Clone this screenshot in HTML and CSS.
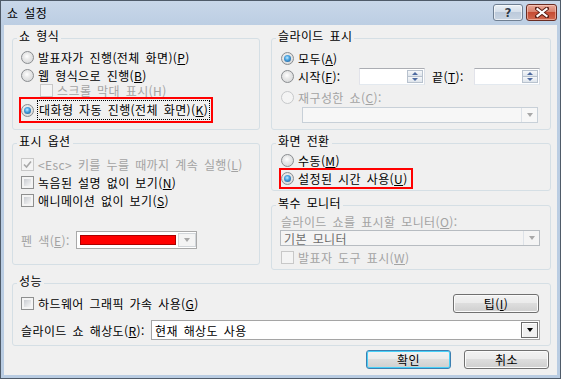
FILE: index.html
```html
<!DOCTYPE html>
<html lang="ko">
<head>
<meta charset="utf-8">
<title>쇼 설정</title>
<link rel="stylesheet" href="styles.css">
</head>
<body>
<div class="window">
  <div class="titlebar">
    <span class="title">쇼 설정</span>
    <span class="tbtn help"><span class="qmark">?</span></span>
    <span class="tbtn close">
      <svg width="14" height="11" viewBox="0 0 14 11">
        <path d="M2 1.5 L12 9.5 M12 1.5 L2 9.5" stroke="#5a1e14" stroke-width="4" stroke-linecap="square"/>
        <path d="M2.5 2 L11.5 9 M11.5 2 L2.5 9" stroke="#ffffff" stroke-width="2.2" stroke-linecap="square"/>
      </svg>
    </span>
  </div>
  <div class="client">
    <div class="grid top">
      <fieldset class="grp">
        <legend>쇼 형식</legend>
        <div class="gin g1">
          <div class="row"><i class="radio"></i>발표자가 진행(전체 화면)(<u>P</u>)</div>
          <div class="row"><i class="radio"></i>웹 형식으로 진행(<u>B</u>)</div>
          <div class="row sub dis"><i class="check dis"></i>스크롤 막대 표시(<u>H</u>)</div>
          <div class="row hl1"><i class="radio on"></i><span class="focus">대화형 자동 진행(전체 화면)(<u>K</u>)</span></div>
        </div>
      </fieldset>
      <fieldset class="grp">
        <legend>슬라이드 표시</legend>
        <div class="gin g2">
          <div class="row"><i class="radio on"></i>모두(<u>A</u>)</div>
          <div class="row r19"><i class="radio"></i><span class="lbl-start">시작(<u>F</u>):</span><span class="spin"><span class="sb"><span><i class="up"></i></span><span><i class="down"></i></span></span></span><span class="lbl-end">끝(<u>T</u>):</span><span class="spin"><span class="sb"><span><i class="up"></i></span><span><i class="down"></i></span></span></span></div>
          <div class="row dis r3"><i class="radio dis"></i>재구성한 쇼(<u>C</u>):</div>
          <div class="combo dis custom"><span class="ctext"></span><span class="cbtn"><i class="arrow"></i></span></div>
        </div>
      </fieldset>
    </div>
    <div class="grid mid">
      <fieldset class="grp opts">
        <legend>표시 옵션</legend>
        <div class="gin g3">
          <div class="row dis"><i class="check dis on"><svg width="9" height="9" viewBox="0 0 9 9"><path d="M1 4.5 L3.5 7 L8 1.5" fill="none" stroke="#a8a8a8" stroke-width="1.6"/></svg></i><span class="esc">&lt;Esc&gt; 키를 누를 때까지 계속 실행(<u>L</u>)</span></div>
          <div class="row"><i class="check"></i>녹음된 설명 없이 보기(<u>N</u>)</div>
          <div class="row"><i class="check"></i>애니메이션 없이 보기(<u>S</u>)</div>
          <div class="row pen dis"><span class="pen-lbl">펜 색(<u>E</u>):</span><span class="ccombo"><span class="swatch"></span><span class="cbtn dis"><i class="arrow"></i></span></span></div>
        </div>
      </fieldset>
      <div class="rcol">
        <fieldset class="grp">
          <legend>화면 전환</legend>
          <div class="gin g4">
            <div class="row r16"><i class="radio"></i>수동(<u>M</u>)</div>
            <div class="row hl2"><i class="radio on"></i>설정된 시간 사용(<u>U</u>)</div>
          </div>
        </fieldset>
        <fieldset class="grp">
          <legend>복수 모니터</legend>
          <div class="gin g5">
            <div class="row dis r14">슬라이드 쇼를 표시할 모니터(<u>O</u>):</div>
            <div class="combo dis mon"><span class="ctext">기본 모니터</span><span class="cbtn"><i class="arrow"></i></span></div>
            <div class="row dis r15"><i class="check dis"></i>발표자 도구 표시(<u>W</u>)</div>
          </div>
        </fieldset>
      </div>
    </div>
    <fieldset class="grp perf">
      <legend>성능</legend>
      <div class="gin g6">
        <div class="row p1"><i class="check"></i>하드웨어 그래픽 가속 사용(<u>G</u>)<span class="btn tip">팁(<u>I</u>)</span></div>
        <div class="row p2"><span class="res-lbl">슬라이드 쇼 해상도(<u>R</u>):</span><span class="combo res"><span class="ctext">현재 해상도 사용</span><span class="cbtn classic"><i class="arrow blk"></i></span></span></div>
      </div>
    </fieldset>
    <div class="btnrow">
      <span class="btn dflt">확인</span>
      <span class="btn">취소</span>
    </div>
  </div>
</div>
</body>
</html>
```
FILE: styles.css
```css
* { box-sizing: border-box; }
html, body { margin: 0; padding: 0; }
body {
  width: 561px; height: 379px; overflow: hidden; background: #ffffff;
  font-family: "Noto Sans CJK KR", "Noto Sans", sans-serif;
  font-size: 12px; letter-spacing: 0.4px; word-spacing: 2px; color: #000;
}
u { text-decoration: underline; text-underline-offset: 1px; }
.window {
  width: 561px; height: 379px;
  border: 1px solid #4f5b69;
  background: linear-gradient(#c8d7e9, #bccee3 24px, #b9cce2);
  display: flex; flex-direction: column;
}
.titlebar { height: 24px; flex: none; display: flex; align-items: flex-start; padding: 3px 3px 0 6px; }
.title { flex: 1; line-height: 18px; }
.tbtn { height: 17px; border-radius: 3px; margin-left: 3px; display: flex; align-items: center; justify-content: center; }
.help {
  width: 30px; border: 1px solid #6f7f92;
  background: linear-gradient(#eaf0f6, #d6dfea 45%, #bccadb 50%, #c8d4e2);
  box-shadow: inset 0 0 0 1px rgba(255,255,255,0.6);
}
.qmark { font-family: "DejaVu Sans", sans-serif; font-weight: bold; font-size: 12px; line-height: 14px; color: #2f3b4a; text-shadow: 0 0 1px #fff; letter-spacing: 0; }
.close {
  width: 31px; border: 1px solid #6a2c22;
  background: linear-gradient(#eaa999, #d8826e 45%, #c54b33 50%, #d1694f);
  box-shadow: inset 0 0 0 1px rgba(255,220,210,0.5);
}
.client {
  flex: 1; margin: 0 3px 3px 3px; background: #f0f0f0;
  padding: 4px 6px 0 8px; display: flex; flex-direction: column; gap: 4px;
}
.grid { display: grid; grid-template-columns: 248px 280px; column-gap: 11px; }
.mid { align-items: start; }
fieldset.grp { margin: 0; padding: 0; min-width: 0; border: 1px solid #d5dfe5; border-radius: 3px; }
legend { margin-left: 4px; padding: 0 2px 4px 2px; line-height: 14px; }
.row { display: flex; align-items: center; height: 18px; white-space: nowrap; }
.dis { color: #a3a3a3; }
.radio {
  width: 13px; height: 13px; flex: none; border-radius: 50%; margin-right: 4px; position: relative;
  border: 1px solid #8a8d90;
  background: radial-gradient(circle at 45% 40%, #ffffff 0, #eaeaea 35%, #cfd1d3 100%);
}
.radio.on::after {
  content: ""; position: absolute; left: 2px; top: 2px; width: 7px; height: 7px; border-radius: 50%;
  background: radial-gradient(circle at 45% 40%, #c4ecff 0, #4aa3e0 40%, #154a82 100%);
}
.radio.dis { border-color: #c6c8ca; background: #f4f4f4; }
.check {
  width: 13px; height: 13px; flex: none; margin-right: 4px; padding: 2px;
  border: 1px solid #8e8f8f;
  background: linear-gradient(135deg, #c9ccd1, #f6f6f6) content-box, #f4f4f4;
  display: flex; align-items: center; justify-content: center;
}
.check.dis { border-color: #c8c8c8; background: #f4f4f4; }
.check.on { padding: 0; }
.check svg { display: block; }

/* group 1 */
.g1 { padding: 1px 8px 8px 8px; }
.sub { height: 13px; margin-left: 19px; }
.hl1 { width: 190px; height: 22px; margin-top: 2px; outline: 2px solid #ff0000; }
.hl1 .radio { margin-right: 3px; }
.focus { border: 1px dotted #000; line-height: 18px; padding: 0 1px; }

/* group 2 */
.g2 { padding: 2px 9px 0 9px; }
.r19 { height: 19px; }
.lbl-start { width: 61px; }
.lbl-end { width: 42px; margin-left: 7px; }
.spin {
  width: 66px; height: 17px; background: #fff; padding: 1px; display: flex; justify-content: flex-end;
  border: 1px solid; border-color: #abadb3 #dbdfe6 #e3e9ef #e2e3ea;
}
.sb { width: 16px; display: flex; flex-direction: column; border: 1px solid #b8c2ce; }
.sb span { flex: 1; display: flex; align-items: center; justify-content: center; background: linear-gradient(#f6f8fa, #dfe5ec); }
.sb span + span { border-top: 1px solid #b8c2ce; }
.up { width: 0; height: 0; border-left: 3px solid transparent; border-right: 3px solid transparent; border-bottom: 3px solid #4d6aa0; }
.down { width: 0; height: 0; border-left: 3px solid transparent; border-right: 3px solid transparent; border-top: 3px solid #4d6aa0; }
.r3 { margin-top: 2px; }
.combo { display: flex; align-items: stretch; border: 1px solid #c8d0d8; background: #f7f7f7; }
.ctext { flex: 1; display: flex; align-items: center; padding-left: 3px; }
.cbtn { width: 16px; flex: none; display: flex; align-items: center; justify-content: center; border-left: 1px solid #dde2e8; }
.arrow { width: 0; height: 0; border-left: 3.5px solid transparent; border-right: 3.5px solid transparent; border-top: 4px solid #a8a8a8; }
.arrow.blk { border-top-color: #000; }
.custom { width: 236px; height: 16px; margin: 1px 0 0 21px; }

/* group 3 */
.g3 { padding: 3px 8px 15px 8px; }
.pen { margin-top: 22px; }
.pen-lbl { width: 55px; }
.ccombo { width: 121px; height: 18px; border: 1px solid #a9a9a9; background: #fff; padding: 3px 0 3px 3px; display: flex; }
.swatch { width: 96px; height: 10px; background: #ff0000; border: 1px solid #a00; }
.ccombo .cbtn { margin: -2px 0 -2px auto; width: 18px; border: 1px solid #d2d6da; background: #f4f4f4; }

/* right column */
.rcol { display: flex; flex-direction: column; gap: 5px; }
.g4 { padding: 0 9px 3px 9px; }
.r16 { height: 16px; }
.hl2 { width: 130px; height: 17px; margin-top: 2px; outline: 2px solid #ff0000; }
.g5 { padding: 0 9px 4px 9px; }
.r14 { height: 14px; }
.mon { width: 260px; height: 16px; margin: 2px 0 0 -1px; border-color: #b7bcc1; background: #f4f4f4; }
.mon .ctext { color: #6d6d6d; }
.r15 { height: 15px; margin-top: 4px; }

/* performance */
.g6 { padding: 2px 11px 5px 8px; }
.p1 { height: 19px; }
.p2 { height: 20px; margin-top: 7px; }
.res-lbl { width: 130px; flex: none; }
.res { width: 389px; height: 20px; flex: none; background: #fff; border-color: #a5a5a5; }
.res .ctext { padding-left: 3px; }
.cbtn.classic { width: 17px; margin: 1px; border: 1px solid #6b6b6b; background: #f0f0f0; box-shadow: inset 1px 1px 0 #fff; }

/* buttons */
.btn {
  display: flex; align-items: center; justify-content: center; height: 19px;
  border: 1px solid #707070; border-radius: 3px;
  background: linear-gradient(#f2f2f2, #ebebeb 45%, #dddddd 50%, #cfcfcf);
  box-shadow: inset 0 0 0 1px #fbfbfb;
}
.tip { width: 86px; margin-left: auto; }
.btnrow { display: flex; justify-content: flex-end; gap: 13px; padding-right: 2px; }
.btnrow .btn { width: 85px; }
.btn.dflt { border-color: #3c7fb1; box-shadow: inset 0 0 0 1px #48d0f8; }
```
